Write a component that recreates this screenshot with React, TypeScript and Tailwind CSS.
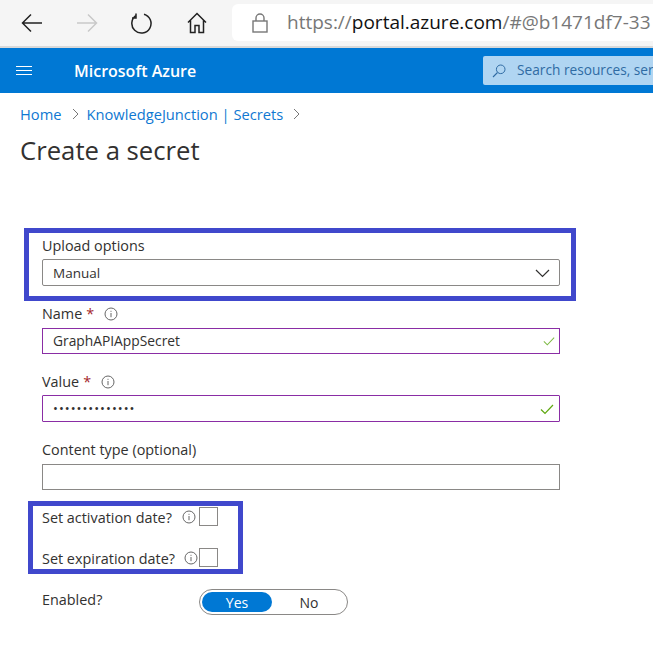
import type { ReactNode } from "react";

const ui = "font-['Open_Sans','Noto_Sans',sans-serif]";

function InfoIcon() {
  return (
    <svg width="14" height="14" viewBox="0 0 14 14" fill="none" className="shrink-0">
      <circle cx="7" cy="7" r="6" stroke="#666" strokeWidth="1" />
      <path d="M7 6v4.2" stroke="#666" strokeWidth="1" />
      <rect x="6.5" y="3.8" width="1" height="1" fill="#666" />
    </svg>
  );
}

function Check({ size, color }: { size: number; color: string }) {
  return (
    <svg width={size} height={size} viewBox="0 0 14 14" fill="none">
      <path d="M1 7.5 L5 11.5 L13 3" stroke={color} strokeWidth="1.2" />
    </svg>
  );
}

function Label({ children, className }: { children: ReactNode; className?: string }) {
  return <div className={`text-[14.4px] leading-[20px] text-[#323130] ${className ?? ""}`}>{children}</div>;
}

function Required() {
  return <span className="text-[#a4262c] ml-[4px]">*</span>;
}

function TopBar() {
  return (
    <div className="h-[48px] bg-[#f5f5f5] border-b-2 border-[#d9d9d9] flex items-center pl-[21px]">
      <svg width="22" height="20" viewBox="0 0 22 20" fill="none">
        <path d="M21 10H1.5M10 1.5 1.5 10l8.5 8.5" stroke="#222" strokeWidth="1.5" />
      </svg>
      <svg width="22" height="20" viewBox="0 0 22 20" fill="none" className="ml-[33px]">
        <path d="M1 10h19.5M12 1.5l8.5 8.5-8.5 8.5" stroke="#c9c9c9" strokeWidth="1.5" />
      </svg>
      <svg width="22" height="24" viewBox="0 0 22 24" fill="none" className="ml-[32px]">
        <path d="M6.5 4.2A9.6 9.6 0 1 0 14 3.2M6 2.5v4.5h-4" stroke="#222" strokeWidth="1.5" fill="none" />
      </svg>
      <svg width="20" height="22" viewBox="0 0 20 22" fill="none" className="ml-[35px]">
        <path d="M1 10.5 10 1.5l9 9M3.5 8.5V20.5h4.5v-7h4v7h4.5V8.5" stroke="#222" strokeWidth="1.5" />
      </svg>
      <div className="ml-[25px] flex-1 h-[37px] bg-white rounded-l-[6px] flex items-center pl-[20px] overflow-hidden whitespace-nowrap -mt-[1px]">
        <svg width="16" height="20" viewBox="0 0 16 20" fill="none" className="shrink-0">
          <rect x="1" y="8" width="14" height="11" stroke="#777" strokeWidth="1.4" />
          <path d="M4 8V5a4 4 0 0 1 8 0v3" stroke="#777" strokeWidth="1.4" />
        </svg>
        <span className="ml-[19px] text-[19px] text-[#777]">
          https://<span className="text-[#111]">portal.azure.com</span>/#@b1471df7-33
        </span>
      </div>
    </div>
  );
}

function AzureBar() {
  return (
    <div className="h-[45px] bg-[#0078d4] flex items-center pl-[16px]">
      <div className="flex flex-col gap-[3px] w-[16px]">
        <div className="h-px bg-white" />
        <div className="h-px bg-white" />
        <div className="h-px bg-white" />
      </div>
      <div className="ml-[42px] text-[16px] font-semibold text-white">Microsoft Azure</div>
      <div className="ml-auto w-[170px] h-[29px] bg-[#b0d5f2] rounded-l-[2px] flex items-center pl-[9px] overflow-hidden whitespace-nowrap">
        <svg width="14" height="14" viewBox="0 0 14 14" fill="none" className="shrink-0">
          <circle cx="8.7" cy="5.3" r="4.3" stroke="#2f6ba3" strokeWidth="1" />
          <path d="M5.5 8.5 1 13" stroke="#2f6ba3" strokeWidth="1.1" />
        </svg>
        <span className="ml-[11px] text-[13.7px] text-[#2f6ba3]">Search resources, serv</span>
      </div>
    </div>
  );
}

function Crumbs() {
  return (
    <div className="flex items-center text-[14.7px] leading-[20px] text-[#0f78d2] mt-[11px] pl-[20px]">
      Home
      <svg width="7" height="12" viewBox="0 0 7 12" fill="none" className="ml-[10px] mr-[8px]">
        <path d="M1 1l5 5-5 5" stroke="#777" />
      </svg>
      KnowledgeJunction | Secrets
      <svg width="7" height="12" viewBox="0 0 7 12" fill="none" className="ml-[10px]">
        <path d="M1 1l5 5-5 5" stroke="#777" />
      </svg>
    </div>
  );
}

function CheckRow({ label, gap }: { label: string; gap: string }) {
  return (
    <div className="flex items-center h-[19px]">
      <span className="text-[14.4px] leading-[20px] mt-[2px] text-[#323130] w-[139px] whitespace-nowrap">{label}</span>
      <span className={gap}><InfoIcon /></span>
      <div className="w-[19px] h-[19px] border border-[#8a8886] ml-auto" />
    </div>
  );
}

export default function App() {
  return (
    <div className={`${ui} w-[653px] h-[647px] bg-white overflow-hidden`}>
      <TopBar />
      <AzureBar />
      <Crumbs />
      <h1 className="text-[25.7px] leading-[32px] font-normal text-[#323130] pl-[20px] mt-[11px]">Create a secret</h1>

      <div className="pl-[24px] mt-[61px] w-[576px]">
        <div className="border-[5px] border-[#4048cc] pl-[13px] pr-[11px] pt-[3px] h-[73px]">
          <Label>Upload options</Label>
          <div className="h-[27px] mt-[3px] border border-[#8a8886] rounded-[2px] flex items-center justify-between pl-[10px] pr-[9px] pt-[1px] text-[13.5px] text-[#323130]">
            Manual
            <svg width="15" height="9" viewBox="0 0 15 9" fill="none">
              <path d="M1 1l6.5 6.5L14 1" stroke="#323130" strokeWidth="1.2" />
            </svg>
          </div>
        </div>

        <div className="pl-[18px] pr-[16px]">
          <Label className="flex items-center mt-[3px]">
            Name<Required /><span className="ml-[10px]"><InfoIcon /></span>
          </Label>
          <div className="h-[26px] mt-[4px] border border-[#8a2da5] flex items-center justify-between pl-[10px] pr-[4px] text-[13.8px] text-[#323130]">
            GraphAPIAppSecret
            <Check size={12} color="#7fba45" />
          </div>

          <Label className="flex items-center mt-[18px]">
            Value<Required /><span className="ml-[10px]"><InfoIcon /></span>
          </Label>
          <div className="h-[27px] mt-[3px] border border-[#8a2da5] rounded-[1px] flex items-center justify-between pl-[10px] pr-[5px] text-[13.5px] text-[#323130]">
            <span className="tracking-[1px] text-[13px]">••••••••••••••</span>
            <Check size={14} color="#5ea80f" />
          </div>

          <Label className="mt-[18px]">Content type (optional)</Label>
          <div className="h-[26px] mt-[4px] border border-[#8a8886]" />
        </div>

        <div className="ml-[4px] mt-[11px] w-[215px] h-[73px] border-[5px] border-[#4048cc] pl-[9px] pr-[20px] pt-[1px] flex flex-col gap-[22px]">
          <CheckRow label="Set activation date?" gap="ml-[1px]" />
          <CheckRow label="Set expiration date?" gap="ml-[3px]" />
        </div>

        <div className="flex pl-[18px] mt-[15px]">
          <Label className="w-[157px] mt-[1px]">Enabled?</Label>
          <div className="w-[149px] h-[26px] border border-[#8a8886] rounded-full flex items-center pl-[2px] text-[14px] text-[#323130]">
            <div className="w-[70px] h-[20px] rounded-full bg-[#0078d4] text-white flex items-center justify-center">Yes</div>
            <div className="w-[74px] text-center">No</div>
          </div>
        </div>
      </div>
    </div>
  );
}
